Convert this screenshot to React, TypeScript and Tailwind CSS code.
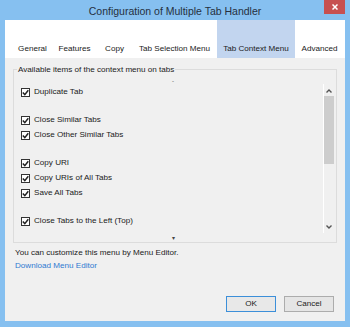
import React from 'react';

const items: (string | null)[] = [
  'Duplicate Tab',
  null,
  'Close Similar Tabs',
  'Close Other Similar Tabs',
  null,
  'Copy URI',
  'Copy URIs of All Tabs',
  'Save All Tabs',
  null,
  'Close Tabs to the Left (Top)',
];

const tabs: { label: string; w: string; active?: boolean }[] = [
  { label: 'General', w: 'w-[39px]' },
  { label: 'Features', w: 'w-[45px]' },
  { label: 'Copy', w: 'w-[35px]' },
  { label: 'Tab Selection Menu', w: 'w-[85px]' },
  { label: 'Tab Context Menu', w: 'w-[78px]', active: true },
  { label: 'Advanced', w: 'w-[49px]' },
];

const Check = () => (
  <span className="w-[9px] h-[9px] border border-[#333] bg-white flex items-center justify-center shrink-0">
    <svg width="7" height="7" viewBox="0 0 7 7">
      <path d="M0.8 3.5 L2.8 5.6 L6.3 1.2" fill="none" stroke="#222" strokeWidth="1.5" />
    </svg>
  </span>
);

export default function App() {
  return (
    <div className="w-[350px] h-[327px] bg-[#86c0f0] flex flex-col font-['Liberation_Sans',Arial,sans-serif] text-[8.1px] text-[#1a1a1a] overflow-hidden">
      {/* title bar */}
      <div className="h-[20px] flex items-center relative shrink-0">
        <div className="flex-1 text-center text-[10.5px] text-[#253040] leading-none pt-[2px]">
          Configuration of Multiple Tab Handler
        </div>
        <div className="absolute right-[5px] top-0 w-[21px] h-[14px] bg-[#c75050] flex items-center justify-center">
          <svg width="6" height="6" viewBox="0 0 6 6">
            <path d="M0.5 0.5 L5.5 5.5 M5.5 0.5 L0.5 5.5" stroke="white" strokeWidth="1.5" />
          </svg>
        </div>
      </div>
      {/* client area */}
      <div className="flex-1 mx-[5px] mb-[6px] bg-[#f0f0f0] flex flex-col">
        <div className="h-[38px] bg-white flex items-end shrink-0 pl-[8px]">
          {tabs.map((t) => (
            <div
              key={t.label}
              className={`${t.w} h-full flex items-end justify-center pb-[3px] whitespace-nowrap ${t.active ? 'bg-[#c2d5ef]' : ''}`}
            >
              {t.label}
            </div>
          ))}
        </div>
        {/* group box */}
        <div className="mt-[11px] mx-[8px] h-[174px] border border-[#dcdcdc] relative flex">
          <div className="absolute -top-[6px] left-[3px] bg-[#f0f0f0] px-[1px] whitespace-nowrap leading-[11px]">
            Available items of the context menu on tabs
          </div>
          <div className="absolute top-[8px] left-[158px] text-[6px] leading-none text-[#444]">-</div>
          <div className="flex-1 flex flex-col pl-[7px] pt-[15px]">
            {items.map((it, i) =>
              it ? (
                <div key={i} className="h-[15px] flex items-center gap-[4px]">
                  <Check />
                  <span>{it}</span>
                </div>
              ) : (
                <div key={i} className="h-[13px]" />
              )
            )}
          </div>
          <div className="w-[11px] mr-[2px] mt-[14px] h-[149px] border-l border-white flex flex-col items-center">
            <svg width="6" height="4" viewBox="0 0 6 4" className="mt-[5px] mb-[3px]">
              <path d="M0.5 3.5 L3 1 L5.5 3.5" fill="none" stroke="#555" strokeWidth="1.4" />
            </svg>
            <div className="w-[10px] h-[68px] bg-[#cdcdcd]" />
            <div className="flex-1" />
            <svg width="6" height="4" viewBox="0 0 6 4" className="mb-[4px]">
              <path d="M0.5 0.5 L3 3 L5.5 0.5" fill="none" stroke="#555" strokeWidth="1.4" />
            </svg>
          </div>
          <div className="absolute bottom-[1px] left-[158px] text-[6px] leading-none text-[#444]">▾</div>
        </div>
        <div className="mt-[3px] pl-[10px] leading-[13px]">You can customize this menu by Menu Editor.</div>
        <div className="pl-[10px] text-[#2f7ad0] leading-[13px]">Download Menu Editor</div>
        <div className="flex-1" />
        <div className="flex justify-end gap-[8px] pr-[11px] pb-[9px]">
          <button className="w-[50px] h-[16px] border border-[#3c8fd9] bg-[#e8e8e8] text-[8.1px] leading-none">OK</button>
          <button className="w-[50px] h-[16px] border border-[#acacac] bg-[#e5e5e5] text-[8.1px] leading-none">Cancel</button>
        </div>
      </div>
    </div>
  );
}
